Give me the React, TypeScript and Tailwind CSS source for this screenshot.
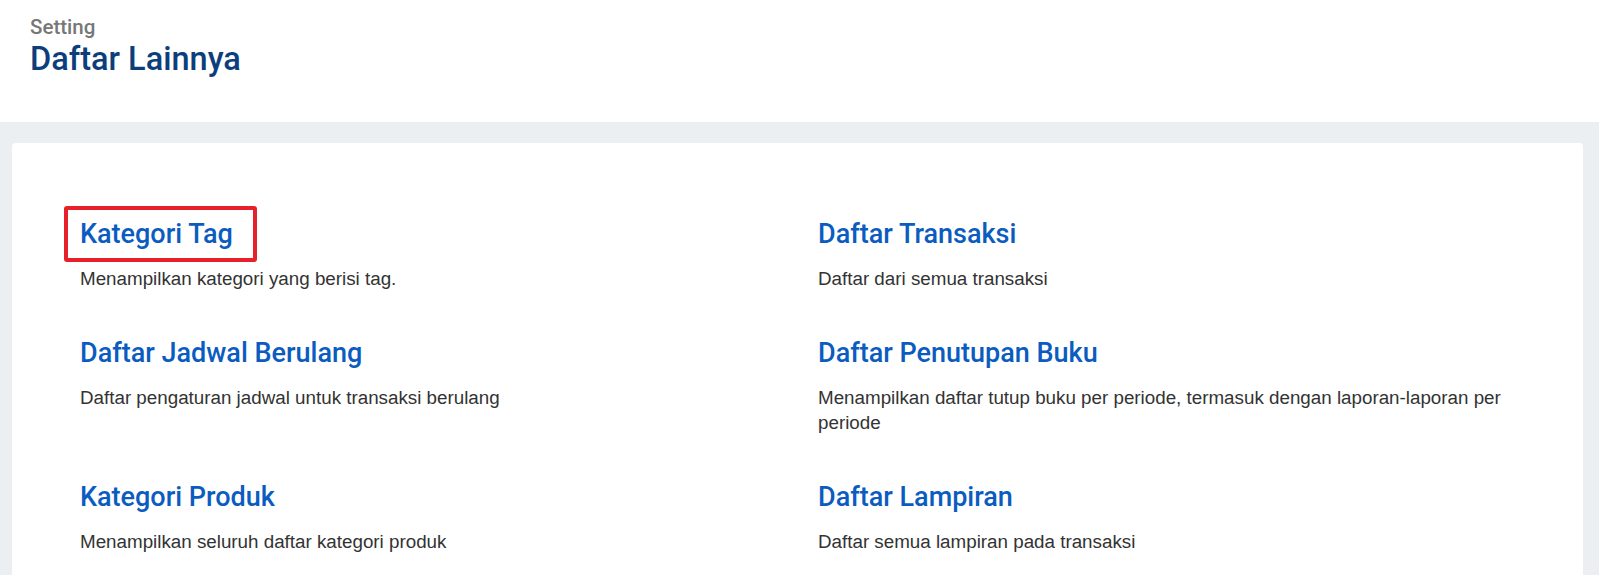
import React from "react";

const items: [string, string][][] = [
  [
    ["Kategori Tag", "Menampilkan kategori yang berisi tag."],
    ["Daftar Transaksi", "Daftar dari semua transaksi"],
  ],
  [
    ["Daftar Jadwal Berulang", "Daftar pengaturan jadwal untuk transaksi berulang"],
    [
      "Daftar Penutupan Buku",
      "Menampilkan daftar tutup buku per periode, termasuk dengan laporan-laporan per periode",
    ],
  ],
  [
    ["Kategori Produk", "Menampilkan seluruh daftar kategori produk"],
    ["Daftar Lampiran", "Daftar semua lampiran pada transaksi"],
  ],
];

function Item({ title, desc, boxed }: { title: string; desc: string; boxed?: boolean }) {
  return (
    <div className="flex flex-col">
      <div className="relative">
        {boxed && (
          <div className="absolute left-[-16px] top-[-12px] w-[193px] h-[56px] border-[4px] border-[#e8202a] rounded-[3px]" />
        )}
        <h2 className="text-[27px] leading-8 font-medium text-[#0b5cc0] font-['Roboto',sans-serif]">
          {title}
        </h2>
      </div>
      <p className="mt-4 text-[18.8px] leading-[25px] text-[#333333] font-['Liberation_Sans',Arial,sans-serif]">
        {desc}
      </p>
    </div>
  );
}

export default function App() {
  return (
    <div className="min-h-[575px] bg-[#eceff1] font-['Roboto',sans-serif]">
      <header className="bg-white h-[122px] pl-[30px] pt-[15px]">
        <div className="text-[20.5px] leading-6 font-medium text-[#777777]">Setting</div>
        <h1 className="text-[32.5px] leading-10 font-medium text-[#0d3e7c]">Daftar Lainnya</h1>
      </header>
      <div className="pt-[21px] pl-3 pr-4">
        <div className="bg-white rounded-[4px] pt-[75px] pl-[68px] pr-[68px] pb-10">
          <div className="flex flex-col gap-[46px]">
            {items.map((row, i) => (
              <div key={i} className="grid grid-cols-[738px_1fr]">
                <Item title={row[0][0]} desc={row[0][1]} boxed={i === 0} />
                <Item title={row[1][0]} desc={row[1][1]} />
              </div>
            ))}
          </div>
        </div>
      </div>
    </div>
  );
}
